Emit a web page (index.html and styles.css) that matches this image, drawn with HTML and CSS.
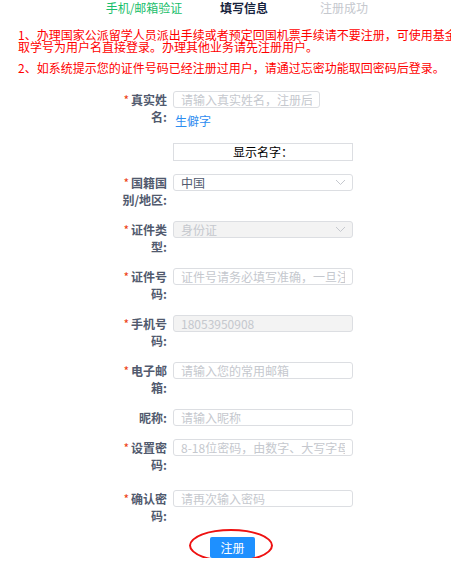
FILE: index.html
```
<!DOCTYPE html>
<html lang="zh-CN">
<head>
  <meta charset="UTF-8">
  <meta name="viewport" content="width=device-width, initial-scale=1.0">
  <title>注册 - 填写信息</title>
  <link rel="stylesheet" href="styles.css">
</head>
<body>

<div class="steps">
  <span class="step done">手机/邮箱验证</span>
  <span class="step active">填写信息</span>
  <span class="step todo">注册成功</span>
</div>

<div class="notice">
  <p>1、办理国家公派留学人员派出手续或者预定回国机票手续请不要注册，可使用基金委<br>取学号为用户名直接登录。办理其他业务请先注册用户。</p>
  <p>2、如系统提示您的证件号码已经注册过用户，请通过忘密功能取回密码后登录。</p>
</div>

<form class="reg-form">
  <div class="row">
    <label class="label"><i>*</i>真实姓名:</label>
    <div class="field">
      <input class="input short" type="text" placeholder="请输入真实姓名，注册后不可修改">
      <a class="rare" href="#">生僻字</a>
      <div class="display-name">显示名字：</div>
    </div>
  </div>

  <div class="row">
    <label class="label"><i>*</i>国籍国别/地区:</label>
    <div class="field">
      <div class="select">中国
        <svg width="11" height="7" viewBox="0 0 11 7"><path d="M1 1l4.5 4.5L10 1" fill="none" stroke="#c5c8ce" stroke-width="1"/></svg>
      </div>
    </div>
  </div>

  <div class="row">
    <label class="label"><i>*</i>证件类型:</label>
    <div class="field">
      <div class="select disabled">身份证
        <svg width="11" height="7" viewBox="0 0 11 7"><path d="M1 1l4.5 4.5L10 1" fill="none" stroke="#c5c8ce" stroke-width="1"/></svg>
      </div>
    </div>
  </div>

  <div class="row">
    <label class="label"><i>*</i>证件号码:</label>
    <div class="field">
      <input class="input" type="text" placeholder="证件号请务必填写准确，一旦注册不可修改">
    </div>
  </div>

  <div class="row">
    <label class="label"><i>*</i>手机号码:</label>
    <div class="field">
      <input class="input" type="text" value="18053950908" disabled>
    </div>
  </div>

  <div class="row">
    <label class="label"><i>*</i>电子邮箱:</label>
    <div class="field">
      <input class="input" type="text" placeholder="请输入您的常用邮箱">
    </div>
  </div>

  <div class="row">
    <label class="label">昵称:</label>
    <div class="field">
      <input class="input" type="text" placeholder="请输入昵称">
    </div>
  </div>

  <div class="row row-pwd">
    <label class="label"><i>*</i>设置密码:</label>
    <div class="field">
      <input class="input" type="password" placeholder="8-18位密码，由数字、大写字母、小写字母组成">
    </div>
  </div>

  <div class="row">
    <label class="label"><i>*</i>确认密码:</label>
    <div class="field">
      <input class="input" type="password" placeholder="请再次输入密码">
    </div>
  </div>

  <div class="submit-row">
    <button class="btn-submit" type="button">注册</button>
    <span class="circle"></span>
  </div>
</form>

</body>
</html>
```

FILE: styles.css
```
html, body {
  overflow: hidden;
}

body {
  margin: 0;
  padding: 0;
  background-color: #ffffff;
  font-family: "Noto Sans CJK SC", "Noto Sans", sans-serif;
  font-size: 12px;
  color: #515a6e;
}

/* steps on top */
.steps {
  display: flex;
  padding-left: 94px;
  line-height: 16px;
}

.step {
  width: 100px;
  text-align: center;
}

.step.done {
  color: #19be6b;
}

.step.active {
  color: #17233d;
  font-weight: bold;
}

.step.todo {
  color: #c5c8ce;
}

/* red notice */
.notice {
  margin-top: 13px;
  padding-left: 18px;
  color: #ff0000;
  white-space: nowrap;
}

.notice p {
  margin: 0 0 9px 0;
  line-height: 12px;
}

/* form */
.reg-form {
  margin: 17px 0 0 119px;
}

.row {
  display: flex;
  gap: 6px;
  margin-bottom: 13px;
}

.row-pwd {
  margin-bottom: 17px;
}

.label {
  width: 48px;
  text-align: right;
  font-weight: bold;
  line-height: 17px;
  color: #515a6e;
}

.label i {
  font-style: normal;
  font-weight: normal;
  color: #ed4014;
  margin-right: 2px;
}

.field {
  width: 180px;
}

.input,
.select {
  display: flex;
  align-items: center;
  width: 180px;
  height: 17px;
  box-sizing: border-box;
  border: 1px solid #dcdee2;
  border-radius: 3px;
  padding: 0 7px;
  font-family: inherit;
  font-size: 12px;
  color: #515a6e;
  background-color: #ffffff;
  outline: none;
}

.input.short {
  width: 147px;
}

.input::placeholder {
  color: #c5c8ce;
}

.input:disabled,
.select.disabled {
  background-color: #f3f3f3;
  color: #c5c8ce;
}

.select {
  justify-content: space-between;
  padding-right: 6px;
}

.rare {
  display: block;
  margin-top: 5px;
  padding-left: 2px;
  line-height: 16px;
  color: #2d8cf0;
  text-decoration: none;
}

.display-name {
  margin-top: 14px;
  height: 18px;
  box-sizing: border-box;
  border: 1px solid #dcdee2;
  line-height: 16px;
  text-align: center;
  color: #000000;
}

/* submit */
.submit-row {
  position: relative;
  margin-left: 91px;
  width: 45px;
}

.btn-submit {
  display: block;
  width: 45px;
  height: 21px;
  padding: 0;
  border: none;
  border-radius: 2px;
  background-color: #1e90ff;
  color: #ffffff;
  font-family: inherit;
  font-size: 12px;
  cursor: pointer;
}

.circle {
  position: absolute;
  left: -21px;
  top: -8px;
  width: 84px;
  height: 33px;
  box-sizing: border-box;
  border: 2px solid #ee1111;
  border-radius: 50%;
  pointer-events: none;
}
```
